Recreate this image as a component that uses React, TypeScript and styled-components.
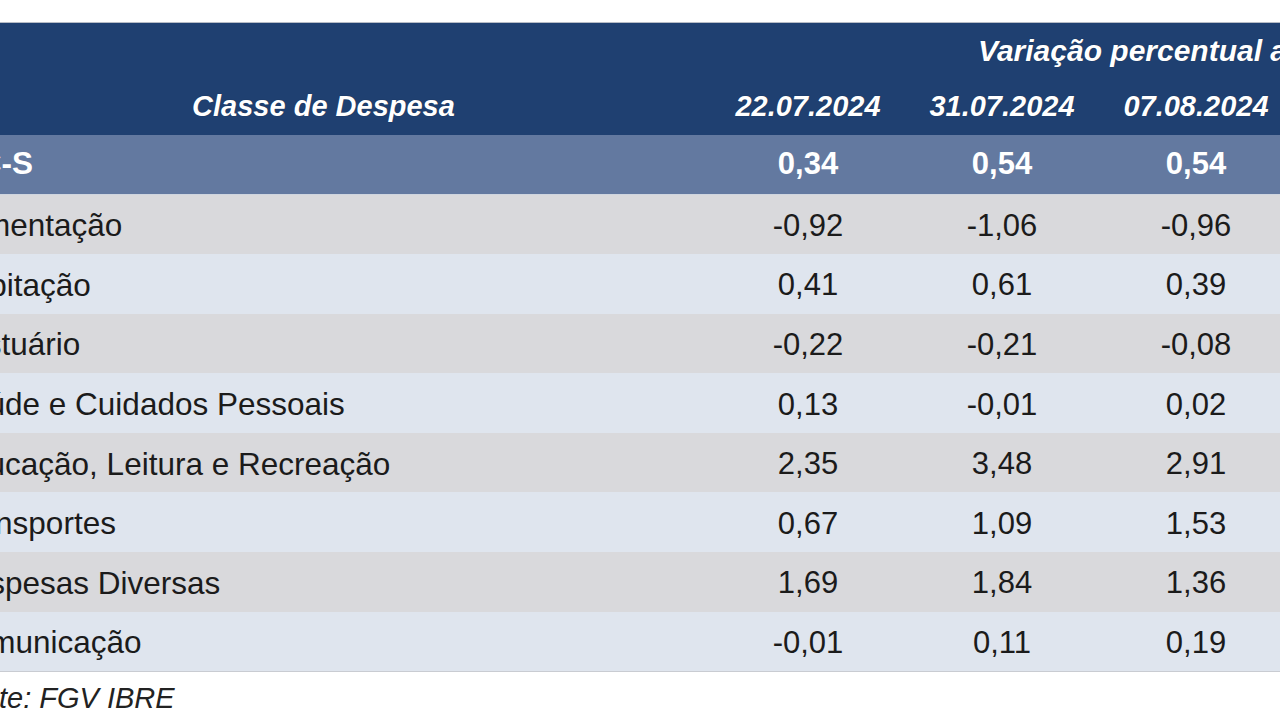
import { FunctionComponent } from "react";
import styled, { createGlobalStyle } from "styled-components";

const GlobalStyle = createGlobalStyle`
  html, body {
    margin: 0;
    padding: 0;
    background: #ffffff;
    overflow: hidden;
  }
`;

const Page = styled.div`
  width: 1280px;
  height: 720px;
  overflow: hidden;
  padding-top: 22px;
  box-sizing: border-box;
  background: #ffffff;
  font-family: "Liberation Sans", Arial, sans-serif;
`;

const Table = styled.table`
  margin-left: -64px;
  border-collapse: collapse;
  table-layout: fixed;
  width: 1745px;
  border-top: 1px solid #b7bcc6;
`;

const HeadRow = styled.tr`
  background-color: #1f4071;
  height: 56px;
`;

const HeadCell = styled.th`
  padding: 0;
  text-align: center;
  vertical-align: middle;
  color: #ffffff;
  font-size: 29px;
  font-weight: 700;
  font-style: italic;
  text-shadow: 0 0 1px rgba(0, 0, 0, 0.45);
  white-space: nowrap;
`;

const GroupCell = styled(HeadCell)`
  text-align: left;
  padding-left: 267px;
  font-size: 30px;
`;

type Tone = "total" | "gray" | "light";

const tones: Record<Tone, string> = {
  total: "#6379a0",
  gray: "#d9d9dc",
  light: "#dfe5ee",
};

const BodyRow = styled.tr<{ $tone: Tone; $last?: boolean }>`
  background-color: ${(p) => tones[p.$tone]};
  height: ${(p) => (p.$tone === "total" ? "60px" : "59.6px")};
  color: ${(p) => (p.$tone === "total" ? "#ffffff" : "#1b1b1b")};
  font-weight: ${(p) => (p.$tone === "total" ? 700 : 400)};
  border-bottom: 1px solid
    ${(p) => (p.$tone === "total" ? "#cfd5df" : p.$last ? "#c9ccd2" : "transparent")};

  & > td {
    padding-top: ${(p) => (p.$tone === "total" ? "0" : "4px")};
  }
`;

const Label = styled.td`
  padding-left: 13px;
  font-size: 31.5px;
  text-align: left;
  vertical-align: middle;
  white-space: nowrap;
`;

const Value = styled.td`
  font-size: 31px;
  text-align: center;
  vertical-align: middle;
  white-space: nowrap;
`;

const Source = styled.div`
  margin-left: -51px;
  height: 54px;
  display: flex;
  align-items: center;
  font-size: 29px;
  font-style: italic;
  color: #222222;
`;

const dates = ["22.07.2024", "31.07.2024", "07.08.2024", "", ""];

const rows: { label: string; values: string[] }[] = [
  { label: "IPC-S", values: ["0,34", "0,54", "0,54"] },
  { label: "Alimentação", values: ["-0,92", "-1,06", "-0,96"] },
  { label: "Habitação", values: ["0,41", "0,61", "0,39"] },
  { label: "Vestuário", values: ["-0,22", "-0,21", "-0,08"] },
  { label: "Saúde e Cuidados Pessoais", values: ["0,13", "-0,01", "0,02"] },
  { label: "Educação, Leitura e Recreação", values: ["2,35", "3,48", "2,91"] },
  { label: "Transportes", values: ["0,67", "1,09", "1,53"] },
  { label: "Despesas Diversas", values: ["1,69", "1,84", "1,36"] },
  { label: "Comunicação", values: ["-0,01", "0,11", "0,19"] },
];

const App: FunctionComponent = () => {
  return (
    <Page>
      <GlobalStyle />
      <Table>
        <colgroup>
          <col style={{ width: 775 }} />
          {dates.map((_, i) => (
            <col key={i} style={{ width: 194 }} />
          ))}
        </colgroup>
        <thead>
          <HeadRow>
            <HeadCell />
            <GroupCell colSpan={5}>Variação percentual acumulada</GroupCell>
          </HeadRow>
          <HeadRow>
            <HeadCell>Classe de Despesa</HeadCell>
            {dates.map((d, i) => (
              <HeadCell key={i}>{d}</HeadCell>
            ))}
          </HeadRow>
        </thead>
        <tbody>
          {rows.map((r, i) => (
            <BodyRow
              key={r.label}
              $tone={i === 0 ? "total" : i % 2 === 1 ? "gray" : "light"}
              $last={i === rows.length - 1}
            >
              <Label>{r.label}</Label>
              {dates.map((_, j) => (
                <Value key={j}>{r.values[j] ?? ""}</Value>
              ))}
            </BodyRow>
          ))}
        </tbody>
      </Table>
      <Source>Fonte: FGV IBRE</Source>
    </Page>
  );
};

export default App;
